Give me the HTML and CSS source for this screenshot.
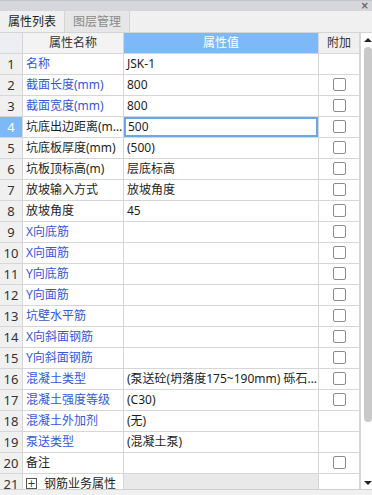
FILE: index.html
```html
<!DOCTYPE html>
<html lang="zh">
<head>
<meta charset="utf-8">
<link rel="stylesheet" href="styles.css">
</head>
<body>
<div class="panel">
  <div class="titlebar"><span class="close">×</span></div>
  <div class="tabs">
    <div class="tab active">属性列表</div>
    <div class="tab">图层管理</div>
  </div>
  <div class="main">
    <div class="grid-wrap">
      <table class="grid">
        <colgroup>
          <col class="c-num"><col class="c-name"><col class="c-val"><col class="c-add">
        </colgroup>
        <thead>
          <tr>
            <th class="h-num"></th>
            <th class="h-name">属性名称</th>
            <th class="h-val">属性值</th>
            <th class="h-add">附加</th>
          </tr>
        </thead>
        <tbody>
          <tr><td class="num">1</td><td class="name blue">名称</td><td class="val">JSK-1</td><td class="add"></td></tr>
          <tr><td class="num">2</td><td class="name blue">截面长度(mm)</td><td class="val">800</td><td class="add"><span class="cb"></span></td></tr>
          <tr><td class="num">3</td><td class="name blue">截面宽度(mm)</td><td class="val">800</td><td class="add"><span class="cb"></span></td></tr>
          <tr class="sel"><td class="num">4</td><td class="name">坑底出边距离(mm)</td><td class="val">500</td><td class="add"><span class="cb"></span></td></tr>
          <tr><td class="num">5</td><td class="name">坑底板厚度(mm)</td><td class="val">(500)</td><td class="add"><span class="cb"></span></td></tr>
          <tr><td class="num">6</td><td class="name">坑板顶标高(m)</td><td class="val">层底标高</td><td class="add"><span class="cb"></span></td></tr>
          <tr><td class="num">7</td><td class="name">放坡输入方式</td><td class="val">放坡角度</td><td class="add"><span class="cb"></span></td></tr>
          <tr><td class="num">8</td><td class="name">放坡角度</td><td class="val">45</td><td class="add"><span class="cb"></span></td></tr>
          <tr><td class="num">9</td><td class="name blue">X向底筋</td><td class="val"></td><td class="add"><span class="cb"></span></td></tr>
          <tr><td class="num">10</td><td class="name blue">X向面筋</td><td class="val"></td><td class="add"><span class="cb"></span></td></tr>
          <tr><td class="num">11</td><td class="name blue">Y向底筋</td><td class="val"></td><td class="add"><span class="cb"></span></td></tr>
          <tr><td class="num">12</td><td class="name blue">Y向面筋</td><td class="val"></td><td class="add"><span class="cb"></span></td></tr>
          <tr><td class="num">13</td><td class="name blue">坑壁水平筋</td><td class="val"></td><td class="add"><span class="cb"></span></td></tr>
          <tr><td class="num">14</td><td class="name blue">X向斜面钢筋</td><td class="val"></td><td class="add"><span class="cb"></span></td></tr>
          <tr><td class="num">15</td><td class="name blue">Y向斜面钢筋</td><td class="val"></td><td class="add"><span class="cb"></span></td></tr>
          <tr><td class="num">16</td><td class="name blue">混凝土类型</td><td class="val">(泵送砼(坍落度175~190mm) 砾石粒径≤31.5mm)</td><td class="add"><span class="cb"></span></td></tr>
          <tr><td class="num">17</td><td class="name blue">混凝土强度等级</td><td class="val">(C30)</td><td class="add"><span class="cb"></span></td></tr>
          <tr><td class="num">18</td><td class="name blue">混凝土外加剂</td><td class="val">(无)</td><td class="add"></td></tr>
          <tr><td class="num">19</td><td class="name blue">泵送类型</td><td class="val">(混凝土泵)</td><td class="add"></td></tr>
          <tr><td class="num">20</td><td class="name">备注</td><td class="val"></td><td class="add"><span class="cb"></span></td></tr>
          <tr class="group"><td class="num">21</td><td class="name"><span class="plus">+</span>钢筋业务属性</td><td class="val"></td><td class="add"></td></tr>
        </tbody>
      </table>
    </div>
    <div class="scrollbar">
      <span class="arrow up"></span>
      <span class="thumb"></span>
      <span class="track"></span>
      <span class="arrow down"></span>
    </div>
  </div>
  <div class="bottombar"></div>
</div>
</body>
</html>
```

FILE: styles.css
```css
* { box-sizing: border-box; }
html, body {
  margin: 0;
  padding: 0;
  background: #f0f0f0;
}
body {
  font-family: "Noto Sans", "Noto Sans CJK SC", sans-serif;
  font-size: 12px;
  color: #1e1e1e;
  width: 372px;
  height: 495px;
  overflow: hidden;
}
.panel {
  display: flex;
  flex-direction: column;
  height: 495px;
}
.titlebar {
  height: 11px;
  background: #d6d7dc;
  border-top: 1px solid #c4c5ca;
  display: flex;
  justify-content: flex-end;
  align-items: center;
  padding-right: 3px;
}
.close {
  font-family: "DejaVu Sans", sans-serif;
  font-size: 10px;
  line-height: 10px;
  color: #666;
  font-weight: bold;
}
.tabs {
  height: 22px;
  background: #f0f0f0;
  border-bottom: 1px solid #d4d4d4;
  display: flex;
}
.tab {
  width: 65px;
  height: 21px;
  line-height: 21px;
  text-align: center;
  color: #8a8a8a;
  background: #e6e6e6;
  border-right: 1px solid #d4d4d4;
  font-size: 12px;
}
.tab.active {
  width: 65px;
  color: #1e1e1e;
  background: #f0f0f0;
}
.main {
  display: flex;
  height: 457px;
  background: #fff;
  border-bottom: 1px solid #cfcfcf;
}
.grid-wrap {
  width: 360px;
  height: 456px;
  overflow: hidden;
}
.grid {
  width: 360px;
  table-layout: fixed;
  border-collapse: separate;
  border-spacing: 0;
}
.c-num { width: 23px; }
.c-name { width: 101px; }
.c-val { width: 195px; }
.c-add { width: 41px; }
.grid th, .grid td {
  height: 21px;
  padding: 0;
  border-right: 1px solid #d6d6d6;
  border-bottom: 1px solid #d6d6d6;
  white-space: nowrap;
  overflow: hidden;
  text-overflow: ellipsis;
  line-height: 20px;
  font-weight: normal;
}
.grid th {
  background: #f3f3f3;
  text-align: center;
  color: #333;
}
.grid th.h-num { background: #eceef3; }
.grid th.h-val { background: #7cb9f6; color: #fff; }
.grid th.h-add { background: #f0f0f0; color: #333; }
.num {
  background: #f0f0f0;
  text-align: center;
  color: #333;
  font-size: 13px;
}
.name { padding-left: 3px !important; }
.val { padding-left: 3px !important; }
.blue { color: #3557da; }
.add { text-align: center; }
.cb {
  display: inline-block;
  width: 13px;
  height: 13px;
  border: 1px solid #8c8c8c;
  border-radius: 2px;
  background: #fff;
  vertical-align: middle;
  margin-top: -2px;
}
.sel .num {
  background: #7cb9f6;
  color: #fff;
}
.sel .val {
  box-shadow: inset 0 0 0 2px #68a8ea;
  padding-left: 4px !important;
}
.group .val { background: #e9e9e9; }
.plus {
  display: inline-block;
  width: 11px;
  height: 11px;
  border: 1px solid #555;
  font-family: "DejaVu Sans", sans-serif;
  font-size: 10px;
  line-height: 9px;
  text-align: center;
  color: #333;
  margin-right: 7px;
  vertical-align: middle;
  margin-top: -2px;
}
.scrollbar {
  width: 12px;
  height: 456px;
  border-left: 1px solid #d6d6d6;
  background: #fff;
  display: flex;
  flex-direction: column;
  align-items: flex-end;
  padding-top: 5px;
  padding-bottom: 4px;
}
.arrow {
  width: 0;
  height: 0;
  border-left: 4px solid transparent;
  border-right: 4px solid transparent;
}
.arrow.up {
  border-bottom: 4px solid #222;
}
.arrow.down {
  border-top: 4px solid #222;
}
.thumb {
  width: 8px;
  height: 375px;
  margin-top: 5px;
  background: #c9c9c9;
  border-radius: 4px;
}
.track { flex: 1; }
.bottombar {
  flex: 1;
  background: #f0f0f0;
}
```
